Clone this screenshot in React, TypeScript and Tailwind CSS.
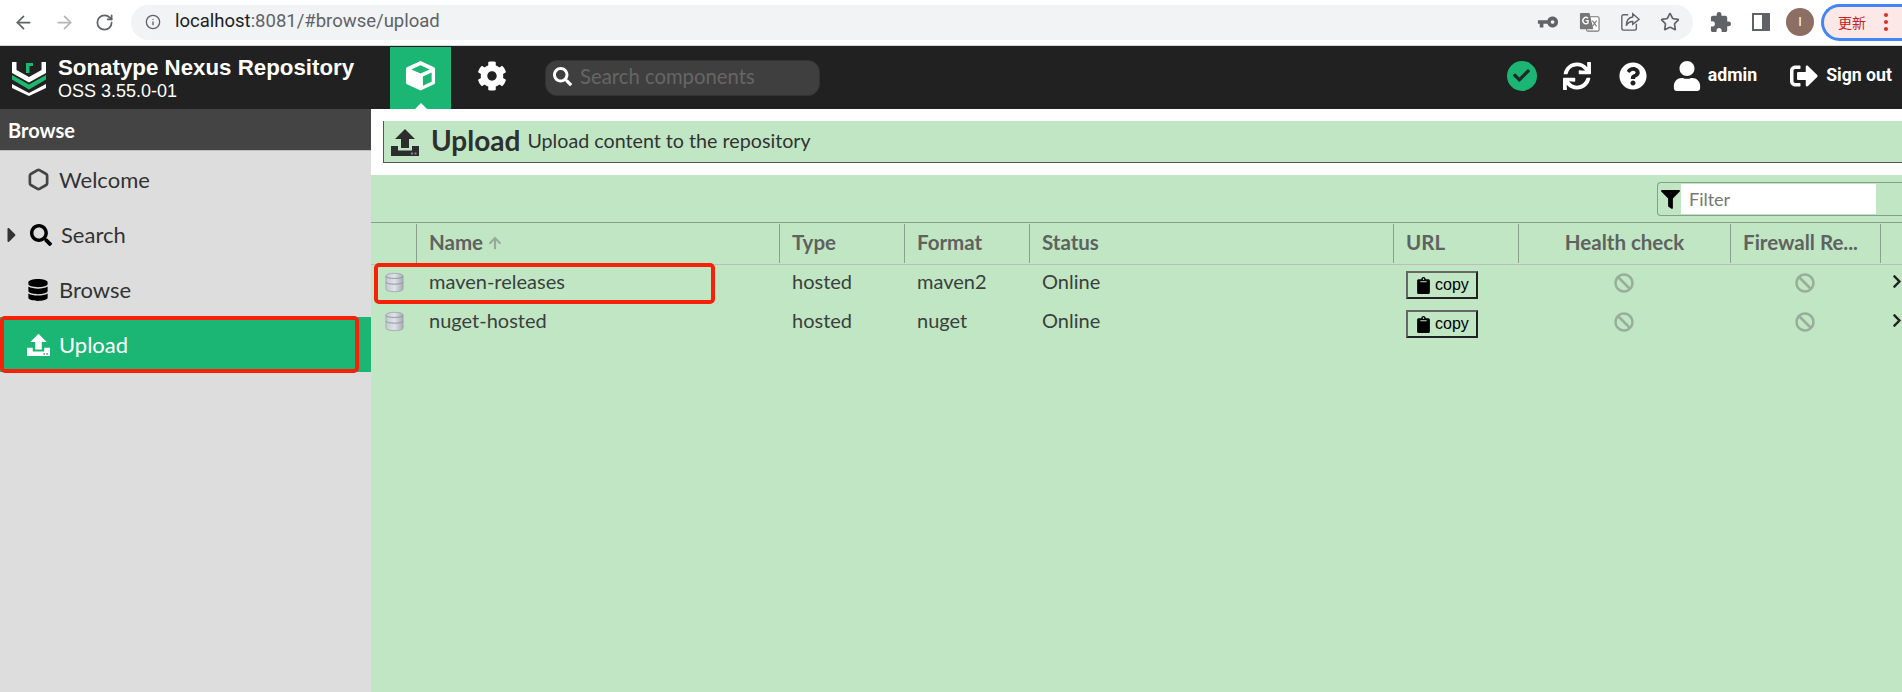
import React from "react";
import { ArrowLeft, ArrowRight, RotateCw, Info, Star, Hexagon } from "lucide-react";
import {
  FaCog, FaSearch, FaCheck, FaSync, FaQuestionCircle, FaUser, FaSignOutAlt, FaFilter,
  FaClipboard, FaBan, FaChevronRight, FaDatabase, FaCaretRight, FaArrowUp,
} from "react-icons/fa";
import { MdVpnKey, MdExtension } from "react-icons/md";

const LatoF = "font-['Lato','Open_Sans',sans-serif]";

function UploadIcon({ className }: { className?: string }) {
  return (
    <svg viewBox="0 0 28 28" className={className} fill="currentColor">
      <path d="M14 1 L24 11 H18 V20 H10 V11 H4 Z" />
      <path d="M0 18 H7 V22.5 H21 V18 H28 V28 H0 Z" />
      <rect x="20" y="24.5" width="2" height="2" fill="#888" />
      <rect x="23.5" y="24.5" width="2" height="2" fill="#888" />
    </svg>
  );
}

function Logo() {
  return (
    <svg viewBox="0 0 36 36" className="w-[36px] h-[36px]">
      <path d="M1 2 H5.500 V10 L18 17 L30.500 10 V2 H35 V13 L18 22.500 L1 13 Z" fill="#fff" />
      <path d="M1 15 L18 24.500 L35 15 V19.500 L18 29.500 L1 19.500 Z" fill="#1cb86f" />
      <path d="M1 24 L18 33 L35 24 V28 L18 36 L1 28 Z" fill="#fff" />
      <path d="M15 13 V3 H22 V6 H18.500 V13 Z" fill="#1cb86f" />
    </svg>
  );
}

function CubeIcon() {
  return (
    <svg viewBox="0 0 32 32" className="w-[31px] h-[31px]">
      <path d="M16 1 L30 7.500 Q31 8 31 10 V23 Q31 24.500 30 25 L16 31.500 L2 25 Q1 24.500 1 23 V10 Q1 8 2 7.500 Z" fill="#fff" />
      <path d="M16 5.500 L25.500 9.800 L16 14 L6.500 9.800 Z" fill="#1cb674" />
      <path d="M18.500 17 L27.500 13 V22.500 L18.500 26.500 Z" fill="#1cb674" />
    </svg>
  );
}

function TranslateIcon() {
  return (
    <svg viewBox="0 0 22 22" className="w-[21px] h-[21px]">
      <rect x="8" y="5" width="13" height="15" rx="1.500" fill="#fff" stroke="#777" strokeWidth="1.200" />
      <path d="M2 1 H11 L15 18 H2 Q1 18 1 17 V2 Q1 1 2 1 Z" fill="#777" />
      <path d="M14 9 L18.500 15 M18.500 9 L14 15" stroke="#777" strokeWidth="1.100" />
      <path d="M9.500 6.500 A3.300 3.300 0 1 0 9.500 11.500 V9 H7" stroke="#fff" strokeWidth="1.400" fill="none" />
    </svg>
  );
}

function ShareIcon() {
  return (
    <svg viewBox="0 0 22 22" className="w-[20px] h-[20px]" fill="none" stroke="#5f6368" strokeWidth="1.500">
      <path d="M9 3 H4 Q2 3 2 5 V18 Q2 20 4 20 H16 Q18 20 18 18 V13" />
      <path d="M14 2 L21 8 L14 13.500 V10.500 C10.500 10.500 8.500 12 7 15 C7 10 9.500 6 14 5.500 Z" />
    </svg>
  );
}

function SidePanelIcon() {
  return (
    <div className="w-[18px] h-[18px] border-2 border-[#5f6368] flex justify-end">
      <div className="w-[6px] h-full bg-[#5f6368]" />
    </div>
  );
}

function DbIcon() {
  return (
    <svg viewBox="0 0 20 22" className="w-[19px] h-[21px]">
      <defs>
        <linearGradient id="dbg" x1="0" x2="1" y1="0" y2="0">
          <stop offset="0" stopColor="#c4cad2" />
          <stop offset="0.500" stopColor="#dfe3e8" />
          <stop offset="1" stopColor="#a6adb6" />
        </linearGradient>
      </defs>
      <path d="M1 4 C1 0.500 19 0.500 19 4 V18 C19 21.500 1 21.500 1 18 Z" fill="url(#dbg)" stroke="#9aa0a8" strokeWidth="0.800" />
      <path d="M1 4.500 C1 7.500 19 7.500 19 4.500 M1 10.500 C1 13.500 19 13.500 19 10.500" fill="none" stroke="#8d949c" strokeWidth="1" />
    </svg>
  );
}

function ChromeBar() {
  return (
    <div className="h-[46px] shrink-0 bg-white border-b border-[#d8d8d8] flex items-center pb-[1px] text-[#5f6368]">
      <div className="w-[131px] flex items-center pl-[13px] gap-[20px] shrink-0">
        <ArrowLeft size={21} strokeWidth={2} />
        <ArrowRight size={21} strokeWidth={2} className="text-[#b4b6b9]" />
        <RotateCw size={19} strokeWidth={2.200} />
      </div>
      <div className="w-[1562px] h-[35px] rounded-full bg-[#f1f3f4] flex items-center shrink-0">
        <Info size={16} strokeWidth={2} className="ml-[14px]" />
        <div className="ml-[14px] text-[18.500px] font-['Roboto',sans-serif] text-[#5f6368] flex-1">
          <span className="text-[#202124]">localhost</span>:8081/#browse/upload
        </div>
        <div className="flex items-center gap-[20px] pr-[13px]">
          <MdVpnKey size={22} className="-scale-x-100" />
          <TranslateIcon />
          <ShareIcon />
          <Star size={20} strokeWidth={2} />
        </div>
      </div>
      <div className="flex items-center shrink-0 pl-[16px] gap-[20px]">
        <MdExtension size={23} />
        <SidePanelIcon />
      </div>
      <div className="ml-[16px] w-[28px] h-[28px] rounded-full bg-[#8d6e63] text-white text-[13px] flex items-center justify-center shrink-0 font-['Roboto',sans-serif]">I</div>
      <div className="ml-[7px] w-[92px] h-[37px] shrink-0 rounded-l-full border-[3px] border-r-0 border-[#4285f4] bg-[#fce8e6] flex items-center pl-[14px] text-[#c5221f] text-[14px] font-['Noto_Sans_CJK_SC',sans-serif]">
        更新
        <span className="ml-[18px] flex flex-col gap-[3px]">
          <span className="w-[4px] h-[4px] rounded-full bg-[#d93025]" />
          <span className="w-[4px] h-[4px] rounded-full bg-[#d93025]" />
          <span className="w-[4px] h-[4px] rounded-full bg-[#d93025]" />
        </span>
      </div>
    </div>
  );
}

function AppHeader() {
  return (
    <div className="h-[63px] shrink-0 bg-[#212121] flex items-center text-white relative">
      <div className="w-[390px] shrink-0 flex items-center pl-[11px]">
        <Logo />
        <div className="ml-[11px] font-['Liberation_Sans',sans-serif] leading-none">
          <div className="text-[22.300px] font-bold leading-[26px]">Sonatype Nexus Repository</div>
          <div className="text-[18px] leading-[20px]">OSS 3.55.0-01</div>
        </div>
      </div>
      <div className="w-[61px] h-full mt-[1px] bg-[#1cb674] flex items-center justify-center shrink-0 relative pb-[6px]">
        <CubeIcon />
        <div className="absolute bottom-0 left-[24px] w-0 h-0 border-l-[7px] border-r-[7px] border-b-[7px] border-l-transparent border-r-transparent border-b-white" />
      </div>
      <div className="w-[94px] shrink-0 flex justify-center pr-[13px] mb-[4px]">
        <FaCog size={30} />
      </div>
      <div className="w-[275px] h-[36px] rounded-[12px] bg-[#3f3f3f] flex items-center pl-[7px] pb-[2px] shrink-0 border border-[#333]">
        <FaSearch size={19} />
        <span className="ml-[8px] text-[#666] text-[20.300px] font-['Lato',sans-serif]">Search components</span>
      </div>
      <div className="flex-1" />
      <div className="flex items-center shrink-0 pr-[10px] mb-[4px] font-['Roboto',sans-serif] font-bold text-[17.700px]">
        <div className="w-[30px] h-[30px] rounded-full bg-[#1cb674] flex items-center justify-center text-[#1f2a24]">
          <FaCheck size={17} />
        </div>
        <FaSync size={28} className="ml-[26px]" />
        <FaQuestionCircle size={28} className="ml-[28px]" />
        <FaUser size={30} className="ml-[25px]" />
        <span className="ml-[6px]">admin</span>
        <FaSignOutAlt size={28} className="ml-[33px]" />
        <span className="ml-[8px]">Sign out</span>
      </div>
    </div>
  );
}

function NavRow({ icon, label, caret, active }: { icon: React.ReactNode; label: string; caret?: boolean; active?: boolean }) {
  return (
    <div className={`h-[55px] flex items-center relative ${active ? "bg-[#1cb674] text-white" : "text-[#333]"}`}>
      {caret && <FaCaretRight size={24} className="absolute left-0 text-[#333]" />}
      <div className="w-[59px] pl-[27px] flex shrink-0">{icon}</div>
      <span className={`${caret ? "ml-[2px]" : ""} text-[22px] ${LatoF}`}>{label}</span>
    </div>
  );
}

function Sidebar() {
  return (
    <div className="w-[371px] shrink-0 bg-[#dddddd] flex flex-col relative">
      <div className="h-[42px] bg-[#444444] border-b border-[#bdbdbd] flex items-center pl-[8px] text-white font-bold text-[20px] font-['Lato',sans-serif]">Browse</div>
      <div className="h-[1px]" />
      <NavRow label="Welcome" icon={<Hexagon size={23} strokeWidth={2.800} className="text-[#444]" />} />
      <NavRow label="Search" caret icon={<FaSearch size={22} className="text-black ml-[3px]" />} />
      <NavRow label="Browse" icon={<FaDatabase size={22} className="text-black" />} />
      <NavRow label="Upload" active icon={<UploadIcon className="w-[23px] h-[23px] text-white" />} />
      <div className="absolute left-0 top-[207px] w-[359px] h-[57px] border-[4px] border-[#f7200a] rounded-[5px]" />
    </div>
  );
}

const cols = "grid grid-cols-[45px_363px_125px_125px_364px_125px_212px_150px_22px]";

function Th({ children, center, first, narrow }: { children?: React.ReactNode; center?: boolean; first?: boolean; narrow?: boolean }) {
  return (
    <div className={`flex items-center min-w-0 overflow-hidden whitespace-nowrap pb-[2px] ${center ? "justify-center" : "pl-[12px]"} ${narrow ? "pr-[10px]" : ""} ${first ? "" : "border-l border-[#8a9f8c]"} my-[1px]`}>
      {children}
    </div>
  );
}

function Row({ name, format }: { name: string; format: string }) {
  return (
    <div className={`${cols} h-[39px] text-[20px] leading-[24px] text-[#3b3f3d] items-start ${LatoF}`}>
      <div className="flex justify-center pt-[7px] pl-[1px]"><DbIcon /></div>
      <div className="pl-[13px] pt-[4px]">{name}</div>
      <div className="pl-[13px] pt-[4px]">hosted</div>
      <div className="pl-[13px] pt-[4px]">{format}</div>
      <div className="pl-[13px] pt-[4px]">Online</div>
      <div className="pl-[13px] pt-[6px]">
        <div className="w-[72px] h-[28px] border-2 border-t-[#666] border-l-[#666] border-b-[#222] border-r-[#222] flex items-center pl-[7px] text-black text-[16px] font-['Liberation_Sans',sans-serif]">
          <FaClipboard size={17} />
          <span className="ml-[3px]">copy</span>
        </div>
      </div>
      <div className="flex justify-center pt-[8px]"><FaBan size={20} className="text-[#98ad9a]" /></div>
      <div className="flex justify-center pt-[8px]"><FaBan size={20} className="text-[#98ad9a]" /></div>
      <div className="flex justify-center pt-[9px] pl-[12px]"><FaChevronRight size={15} className="text-[#222]" /></div>
    </div>
  );
}

function Main() {
  return (
    <div className="flex-1 min-w-0 flex flex-col relative bg-[#c0e6c4]">
      <div className="h-[66px] shrink-0 bg-white pt-[12px] pl-[12px]">
        <div className="h-[42px] bg-[#c0e6c4] border-l border-b border-[#555] flex items-center pl-[7px]">
          <UploadIcon className="w-[28px] h-[28px] text-[#2d2d2d]" />
          <span className={`ml-[12px] mb-[3px] text-[28px] leading-[36px] font-bold text-[#2f2f2f] ${LatoF}`}>Upload</span>
          <span className={`ml-[7px] mb-[1px] text-[19.700px] text-[#333] ${LatoF}`}>Upload content to the repository</span>
        </div>
      </div>
      <div className="h-[47px] shrink-0 flex justify-end items-start pt-[7px]">
        <div className="w-[245px] h-[34px] rounded-l-[4px] border border-r-0 border-[#84a088] flex items-center pl-[3px]">
          <FaFilter size={19} className="text-black shrink-0" />
          <div className={`ml-[1px] w-[195px] h-[30px] bg-white text-[18px] text-[#777] pl-[8px] flex items-center ${LatoF}`}>Filter</div>
        </div>
      </div>
      <div className={`${cols} h-[43px] border-t border-[#8a9f8c] border-b border-b-[#bdbdbd] text-[20.500px] font-bold text-[#5f625f] shrink-0 ${LatoF}`}>
        <Th first />
        <Th>Name <FaArrowUp size={14} className="ml-[5px] text-[#9aa89b]" /></Th>
        <Th>Type</Th>
        <Th>Format</Th>
        <Th>Status</Th>
        <Th>URL</Th>
        <Th center>Health check</Th>
        <Th center narrow>Firewall Re...</Th>
        <Th />
      </div>
      <Row name="maven-releases" format="maven2" />
      <Row name="nuget-hosted" format="nuget" />
      <div className="absolute left-[3px] top-[154px] w-[341px] h-[41px] border-[4px] border-[#f7200a] rounded-[5px]" />
    </div>
  );
}

export default function App() {
  return (
    <div className="w-[1902px] h-[692px] overflow-hidden flex flex-col bg-white">
      <ChromeBar />
      <AppHeader />
      <div className="flex-1 flex min-h-0">
        <Sidebar />
        <Main />
      </div>
    </div>
  );
}
